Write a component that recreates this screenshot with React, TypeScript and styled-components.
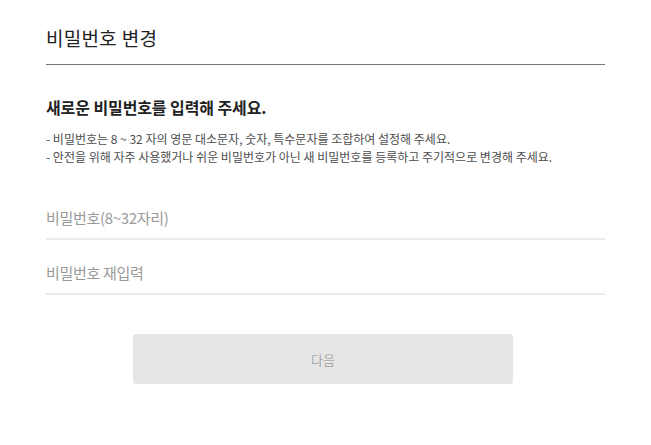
import React from 'react'
import styled, { createGlobalStyle } from 'styled-components'

const GlobalStyle = createGlobalStyle`
  body {
    margin: 0;
    background: #fff;
    font-family: 'Noto Sans CJK KR', 'Noto Sans', sans-serif;
  }
`

const App: React.FC = () => {
  return (
    <>
      <GlobalStyle />
      <Page>
        <Title>비밀번호 변경</Title>
        <Heading>새로운 비밀번호를 입력해 주세요.</Heading>
        <Notes>
          <li>- 비밀번호는 8 ~ 32 자의 영문 대소문자, 숫자, 특수문자를 조합하여 설정해 주세요.</li>
          <li>- 안전을 위해 자주 사용했거나 쉬운 비밀번호가 아닌 새 비밀번호를 등록하고 주기적으로 변경해 주세요.</li>
        </Notes>
        <Field type="password" placeholder="비밀번호(8~32자리)" />
        <Field type="password" placeholder="비밀번호 재입력" $gap={11} />
        <NextButton disabled>다음</NextButton>
      </Page>
    </>
  )
}

const Page = styled.div`
  display: flex;
  flex-direction: column;
  width: 559px;
  padding: 25px 0 40px 46px;
`

const Title = styled.h1`
  margin: 0;
  padding-bottom: 13px;
  border-bottom: 1px solid #777;
  font-size: 19px;
  line-height: 26px;
  font-weight: 400;
  color: #222;
  letter-spacing: 0.3px;
`

const Heading = styled.h2`
  margin: 31px 0 0;
  font-size: 16px;
  line-height: 22px;
  font-weight: 700;
  color: #222;
  letter-spacing: -0.1px;
`

const Notes = styled.ul`
  margin: 12px 0 0;
  padding: 0;
  list-style: none;

  li {
    font-size: 12px;
    line-height: 18px;
    color: #4d4d4d;
    letter-spacing: 0;
  }
`

const Field = styled.input<{ $gap?: number }>`
  box-sizing: content-box;
  height: 42px;
  margin: ${(p) => p.$gap ?? 30}px 0 0;
  padding: 0;
  border: none;
  border-bottom: 2px solid #ebebeb;
  outline: none;
  font-family: 'Noto Sans CJK KR', 'Noto Sans', sans-serif;
  font-size: 15px;
  color: #222;
  letter-spacing: -0.3px;

  &::placeholder {
    color: #999;
  }
`

const NextButton = styled.button`
  width: 380px;
  height: 50px;
  margin: 39px 0 0 87px;
  border: none;
  border-radius: 3px;
  background: #e6e6e6;
  font-family: 'Noto Sans CJK KR', 'Noto Sans', sans-serif;
  font-size: 13px;
  color: #aaa;
  cursor: default;
`

export default App
